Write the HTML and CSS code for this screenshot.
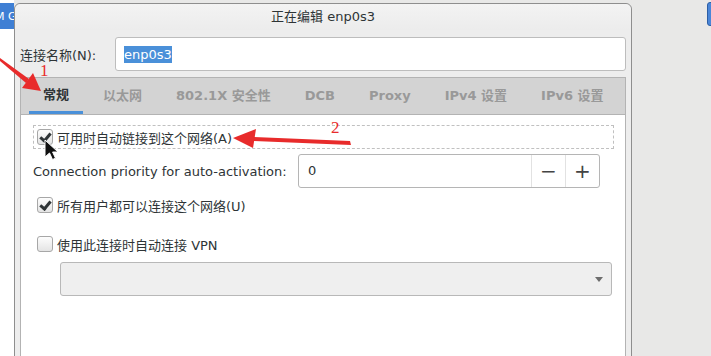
FILE: index.html
```html
<!DOCTYPE html>
<html lang="zh-CN">
<head>
    <meta charset="UTF-8">
    <title>正在编辑 enp0s3</title>
    <link rel="stylesheet" href="styles.css">
</head>
<body>
    <div class="desk">
        <!-- background windows -->
        <div class="side-left"><div class="side-bar">M G</div></div>
        <div class="side-right"></div>

        <!-- editor dialog -->
        <div class="dialog">
            <div class="titlebar">正在编辑 enp0s3</div>
            <div class="dialog-body">
                <div class="name-row">
                    <label class="name-label">连接名称(N):</label>
                    <div class="entry"><span class="sel">enp0s3</span></div>
                </div>

                <div class="notebook">
                    <div class="tabs">
                        <div class="tab active">常规</div>
                        <div class="tab">以太网</div>
                        <div class="tab">802.1X 安全性</div>
                        <div class="tab">DCB</div>
                        <div class="tab">Proxy</div>
                        <div class="tab">IPv4 设置</div>
                        <div class="tab">IPv6 设置</div>
                    </div>
                    <div class="page">
                        <div class="check-row focus">
                            <span class="check on"></span>
                            <span>可用时自动链接到这个网络(A)</span>
                        </div>
                        <div class="prio-row">
                            <span class="prio-label">Connection priority for auto-activation:</span>
                            <div class="spin">
                                <span class="spin-value">0</span>
                                <span class="spin-btn">&minus;</span>
                                <span class="spin-btn">+</span>
                            </div>
                        </div>
                        <div class="check-row users">
                            <span class="check on"></span>
                            <span>所有用户都可以连接这个网络(U)</span>
                        </div>
                        <div class="check-row vpn">
                            <span class="check"></span>
                            <span>使用此连接时自动连接 VPN</span>
                        </div>
                        <div class="combo"><span class="combo-arrow"></span></div>
                    </div>
                </div>
            </div>
        </div>

        <!-- screenshot annotations -->
        <svg class="marks" width="711" height="356" viewBox="0 0 711 356">
            <polygon fill="#e82b2b" points="0,58 0,61 26,83 29,79"/>
            <polygon fill="#e82b2b" points="41,91 22,88 33,73"/>
            <polygon fill="#e82b2b" points="350,141 351,145 254,141 254,137"/>
            <polygon fill="#e82b2b" points="233,138 256,129 253,148"/>
            <path d="M45 140 L45 157 L49.5 153 L52.5 159.5 L55.5 158.2 L52.6 152 L58 152 Z" fill="#111" stroke="#fff" stroke-width="1"/>
        </svg>
        <div class="num num-one">1</div>
        <div class="num num-two">2</div>
    </div>
</body>
</html>
```

FILE: styles.css
```css
body {
    margin: 0;
    font-family: "DejaVu Sans", "Noto Sans CJK SC", sans-serif;
    font-size: 13px;
    color: #2e3436;
}
.desk {
    position: relative;
    width: 711px;
    height: 356px;
    background: #e8e8e7;
    overflow: hidden;
}
.side-left {
    position: absolute;
    left: 0;
    top: 0;
    width: 14px;
    height: 356px;
    background: #fff;
    overflow: hidden;
}
.side-bar {
    margin-top: 3px;
    height: 26px;
    line-height: 28px;
    background: #3f7fd4;
    color: #fff;
    font-size: 11px;
    white-space: nowrap;
    text-indent: -5px;
}
.side-right {
    position: absolute;
    right: -4px;
    top: 2px;
    width: 6px;
    height: 22px;
    background: #4a86d8;
    border: 1px solid #2c5ea5;
    border-radius: 3px;
}
.dialog {
    position: absolute;
    left: 14px;
    top: 3px;
    width: 618px;
    height: 380px;
    box-sizing: border-box;
    border: 1px solid #8e8e8e;
    border-radius: 6px 6px 0 0;
    background: #ededed;
}
.titlebar {
    height: 26px;
    line-height: 26px;
    text-align: center;
    border-radius: 6px 6px 0 0;
    background: linear-gradient(#f3f3f3, #ececec);
}
.dialog-body {
    padding: 7px 5px 0 5px;
}
.name-row {
    display: flex;
    align-items: center;
    height: 34px;
}
.name-label {
    width: 95px;
}
.entry {
    flex: 1;
    height: 34px;
    box-sizing: border-box;
    border: 1px solid #bdbdbd;
    border-radius: 3px;
    background: #fff;
    display: flex;
    align-items: center;
    padding-left: 8px;
}
.sel {
    background: #4a90d9;
    color: #fff;
    line-height: 17px;
}
.notebook {
    margin-top: 6px;
    border: 1px solid #b3b3b3;
    border-bottom: none;
}
.tabs {
    display: flex;
    gap: 6px;
    height: 36px;
    padding-left: 8px;
    background: #d3d3d3;
    border-bottom: 1px solid #b3b3b3;
}
.tab {
    padding: 0 14px;
    line-height: 36px;
    font-weight: bold;
    color: #999;
    box-sizing: border-box;
}
.tab.active {
    color: #2e3436;
    border-bottom: 3px solid #4a90d9;
    line-height: 33px;
}
.page {
    background: #fff;
    height: 260px;
    padding: 10px 11px 0 12px;
}
.check-row {
    display: flex;
    align-items: center;
    gap: 4px;
}
.check {
    width: 16px;
    height: 16px;
    box-sizing: border-box;
    border: 1px solid #a7a7a7;
    border-radius: 3px;
    background: linear-gradient(#fdfdfd, #e4e4e4);
    position: relative;
}
.check.on::after {
    content: "";
    position: absolute;
    left: 4px;
    top: 1px;
    width: 4px;
    height: 8px;
    border: solid #2e3436;
    border-width: 0 3px 3px 0;
    transform: rotate(40deg);
}
.focus {
    height: 24px;
    box-sizing: border-box;
    border: 1px dashed #c0c0c0;
    padding-left: 3px;
}
.prio-row {
    display: flex;
    align-items: center;
    margin-top: 5px;
    height: 34px;
}
.prio-label {
    width: 265px;
}
.spin {
    display: flex;
    width: 302px;
    height: 34px;
    box-sizing: border-box;
    border: 1px solid #b5b5b5;
    border-radius: 3px;
}
.spin-value {
    flex: 1;
    padding-left: 9px;
    line-height: 32px;
}
.spin-btn {
    width: 33px;
    border-left: 1px solid #e2e2e2;
    text-align: center;
    line-height: 32px;
    font-size: 20px;
    color: #444;
}
.users {
    margin-top: 9px;
    margin-left: 4px;
    height: 16px;
}
.vpn {
    margin-top: 23px;
    margin-left: 4px;
    height: 16px;
}
.combo {
    margin: 10px 2px 0 27px;
    height: 34px;
    box-sizing: border-box;
    border: 1px solid #b8b8b8;
    border-radius: 3px;
    background: #efefef;
    display: flex;
    align-items: center;
    justify-content: flex-end;
    padding-right: 8px;
}
.combo-arrow {
    width: 0;
    height: 0;
    border-left: 4px solid transparent;
    border-right: 4px solid transparent;
    border-top: 5px solid #6d6d6d;
}
.marks {
    position: absolute;
    left: 0;
    top: 0;
    pointer-events: none;
}
.num {
    position: absolute;
    font-family: "Liberation Serif", serif;
    color: #e82b2b;
}
.num-one {
    left: 40px;
    top: 61px;
    font-size: 17px;
}
.num-two {
    left: 331px;
    top: 118px;
    font-size: 17px;
}
```
